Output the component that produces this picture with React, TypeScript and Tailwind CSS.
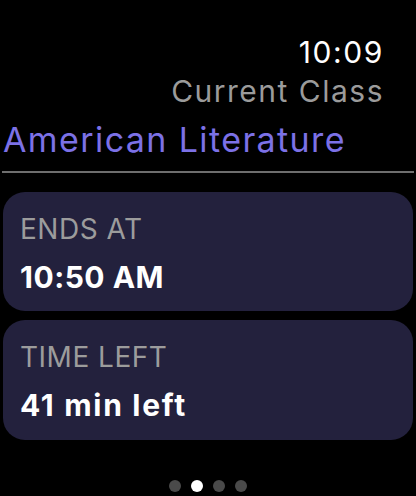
export default function App() {
  return (
    <div
      className="w-[416px] h-[496px] bg-black flex flex-col overflow-hidden"
      style={{ fontFamily: "Inter, 'Noto Sans', sans-serif" }}
    >
      <div className="flex flex-col items-end pr-[32px] pt-[34px]">
        <div className="text-[30px] leading-[36px] tracking-[1.6px] text-white">10:09</div>
        <div className="mt-[3px] text-[30px] leading-[36px] tracking-[1.5px] text-[#9b9b9b]">Current Class</div>
      </div>
      <div className="pl-[3px] mt-[11px] text-[34px] leading-[40px] tracking-[1.4px] text-[#7c71e6]">American Literature</div>
      <div className="mx-[2px] mt-[11px] h-[2px] bg-[#6e6e6e]" />
      <div className="mx-[3px] mt-[19px] flex flex-col gap-[9px]">
        <div className="h-[119px] rounded-[22px] bg-[#23213d] pl-[17px] pt-[20px]">
          <div className="text-[28px] leading-[34px] tracking-[0.5px] text-[#9c9c9c]">ENDS AT</div>
          <div className="mt-[13px] text-[30px] leading-[36px] tracking-[0.5px] font-bold text-white">10:50 AM</div>
        </div>
        <div className="h-[120px] rounded-[22px] bg-[#23213d] pl-[17px] pt-[20px]">
          <div className="text-[28px] leading-[34px] tracking-[0.5px] text-[#9c9c9c]">TIME LEFT</div>
          <div className="mt-[13px] text-[30px] leading-[36px] tracking-[1.7px] font-bold text-white">41 min left</div>
        </div>
      </div>
      <div className="mt-[40px] flex justify-center gap-[10px]">
        <div className="w-[12px] h-[12px] rounded-full bg-[#4a4a4a]" />
        <div className="w-[12px] h-[12px] rounded-full bg-white" />
        <div className="w-[12px] h-[12px] rounded-full bg-[#4a4a4a]" />
        <div className="w-[12px] h-[12px] rounded-full bg-[#4a4a4a]" />
      </div>
    </div>
  );
}
